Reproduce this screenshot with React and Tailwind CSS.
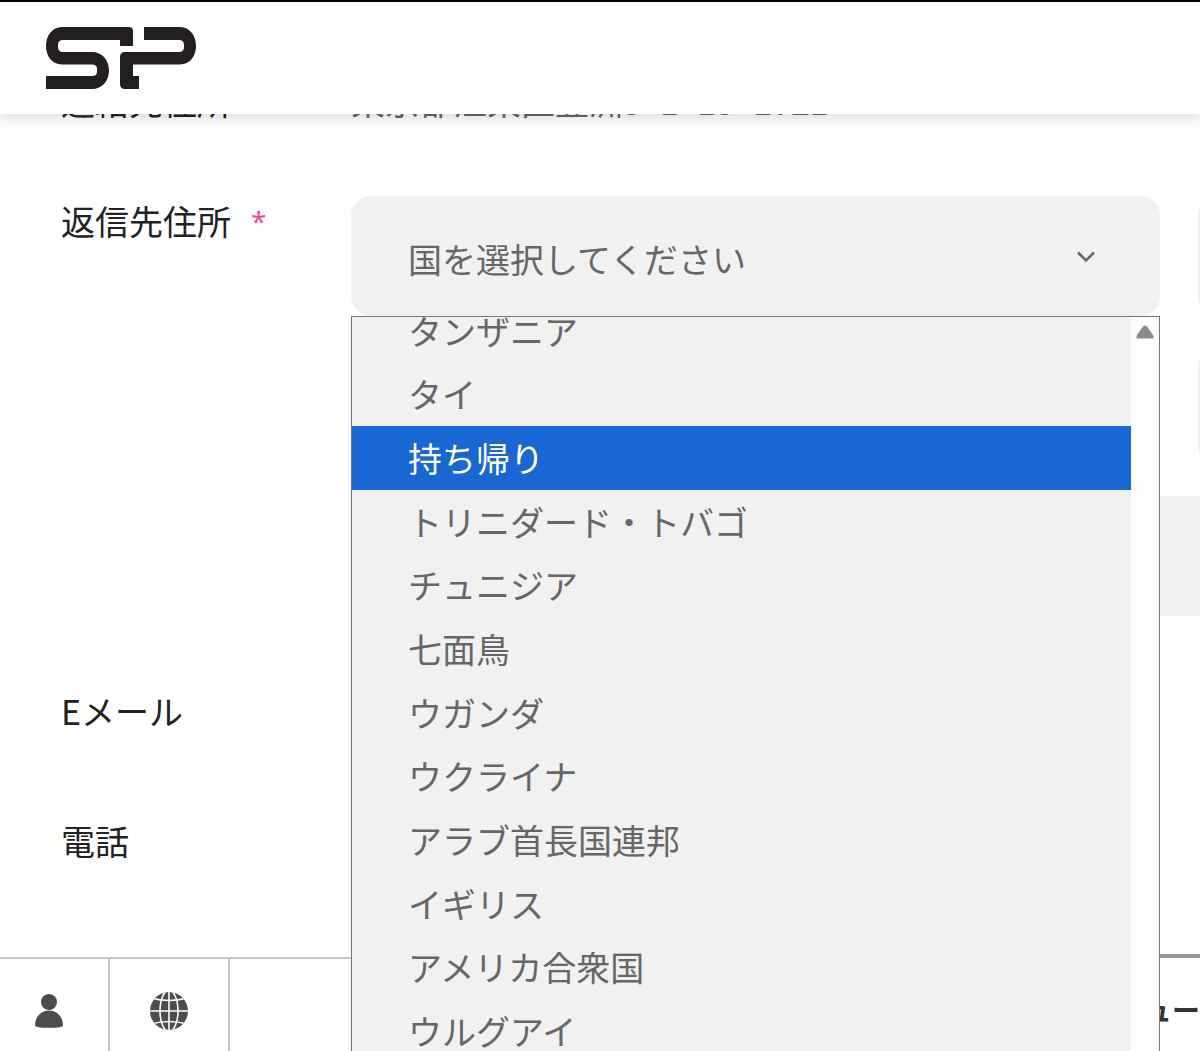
const countries = [
  'タンザニア',
  'タイ',
  '持ち帰り',
  'トリニダード・トバゴ',
  'チュニジア',
  '七面鳥',
  'ウガンダ',
  'ウクライナ',
  'アラブ首長国連邦',
  'イギリス',
  'アメリカ合衆国',
  'ウルグアイ',
];

function Logo() {
  return (
    <svg viewBox="0 0 150 62" className="h-[62px] w-[150px] fill-[#231f20]" aria-hidden="true">
      <path d="M16 0H83Q87 0 87 4V19H74V13H17Q12 13 12 18V20Q12 25 17 25H46C56 25 63 33 63 43.5S56 62 46 62H0V49H46Q51 49 51 44.5V42Q51 37.5 46 37.5H16C6 37.5 0 29 0 19S6 0 16 0Z" />
      <path d="M98 0H134C144 0 150 9 150 19S144 37.5 134 37.5H87V49H93V62H79Q74 62 74 57V30Q74 25 79 25H133Q138 25 138 20V18Q138 13 133 13H98Z" />
    </svg>
  );
}

function UserIcon() {
  return (
    <svg viewBox="0 0 30 36" className="h-9 w-[30px] fill-[#4d4d4d]" aria-hidden="true">
      <circle cx="15" cy="9" r="8" />
      <path d="M15 17.5C23 17.5 29 24 29 32.5Q29 34.8 15 34.8T1 32.5C1 24 7 17.5 15 17.5Z" />
    </svg>
  );
}

function GlobeIcon() {
  return (
    <svg viewBox="0 0 38 38" className="h-[38px] w-[38px]" aria-hidden="true">
      <defs>
        <clipPath id="globe">
          <circle cx="19" cy="19" r="19" />
        </clipPath>
      </defs>
      <circle cx="19" cy="19" r="19" fill="#4d4d4d" />
      <g clipPath="url(#globe)" fill="none" stroke="#fff" strokeWidth="1.6">
        <path d="M19 0V38M0 19H38" />
        <ellipse cx="19" cy="19" rx="9" ry="20.5" />
        <path d="M1 6Q19 11 37 6M1 32Q19 27 37 32" />
      </g>
    </svg>
  );
}

function CountryField() {
  return (
    <div className="relative">
      <select
        id="country"
        defaultValue=""
        className="h-[120px] w-full appearance-none rounded-[20px] bg-[#f1f1f1] pt-1 pr-24 pb-0 pl-[57px] text-[34px] text-[#666] outline-none"
      >
        <option value="">国を選択してください</option>
        {countries.map((name) => (
          <option key={name}>{name}</option>
        ))}
      </select>
      <svg
        viewBox="0 0 20 12"
        className="pointer-events-none absolute top-[55px] right-16 h-3 w-5 fill-none stroke-[#666]"
        strokeWidth="2.6"
        aria-hidden="true"
      >
        <path d="M2 1.5L10 9.5L18 1.5" />
      </svg>
      <div className="absolute top-full right-0 left-0 z-20 flex overflow-hidden border border-[#767676] bg-[#f1f1f1]">
        <ul role="listbox" aria-label="国" className="-mt-[18px] grid h-[764px] flex-1 auto-rows-fr">
          {countries.map((name) => (
            <li
              key={name}
              role="option"
              aria-selected={name === '持ち帰り'}
              className="flex items-center pl-14 text-[34px] leading-[48px] text-[#666] aria-selected:bg-[#1967d2] aria-selected:text-white"
            >
              {name}
            </li>
          ))}
        </ul>
        <div className="flex w-7 justify-center bg-[#fcfcfc] pt-2">
          <svg viewBox="0 0 18 14" className="h-3.5 w-[18px] fill-[#8b8b8b]" aria-hidden="true">
            <path d="M7 1.5Q9 -0.5 11 1.5L17 10Q18.5 13.5 16 13.5H2Q-0.5 13.5 1 10Z" />
          </svg>
        </div>
      </div>
    </div>
  );
}

const box = 'h-[120px] w-full rounded-[20px] bg-[#f1f1f1] px-14 text-[34px] text-[#666] outline-none';
const label = 'w-[290px] shrink-0 text-[34px] leading-[50px]';

export default function App() {
  return (
    <div className="relative flex h-screen flex-col overflow-hidden bg-white font-['Noto_Sans_CJK_JP',sans-serif] text-[#222]">
      <header className="relative z-30 flex h-[114px] shrink-0 items-center border-t-2 border-black bg-white pl-[46px] shadow-[0_0_16px_2px_rgba(0,0,0,0.18)]">
        <a href="#home" aria-label="SP">
          <Logo />
        </a>
      </header>

      <main className="-mt-[38px] min-h-0 flex-1 pl-[61px]">
        <div className="flex">
          <div className={label}>連絡先住所</div>
          <div className="text-[34px] leading-[50px] whitespace-nowrap text-[#666]">東京都江東区豊洲5–1–15–1721</div>
        </div>
        <div className="mt-[70px] flex">
          <label htmlFor="country" className={`${label} flex gap-5`}>
            返信先住所
            <span className="font-['Noto_Sans',sans-serif] text-[28px] leading-[50px] text-[#ef4e97]">*</span>
          </label>
          <div className="min-w-0 flex-1">
            <div className="grid w-[195%] grid-cols-2 gap-x-[38px] gap-y-[30px]">
              <CountryField />
              <input aria-label="都道府県" className={box} />
              <input aria-label="市区町村" className={box} />
              <input aria-label="郵便番号" className={box} />
              <input aria-label="住所" className={`${box} col-span-2`} />
            </div>
          </div>
        </div>
        <div className="mt-[70px] flex">
          <div className={label}>Eメール</div>
        </div>
        <div className="mt-20 flex">
          <div className={label}>電話</div>
        </div>
      </main>

      <footer className="relative z-10 flex h-[94px] shrink-0 bg-white">
        <button aria-label="アカウント" className="flex w-[110px] items-center justify-center border-t-2 border-r-2 border-[#c4c4c4] pt-3 pr-2.5">
          <UserIcon />
        </button>
        <button aria-label="言語" className="flex w-[120px] items-center justify-center border-t-2 border-r-2 border-[#c4c4c4] pt-3">
          <GlobeIcon />
        </button>
        <div className="flex-1 border-t-2 border-[#c4c4c4]" />
        <button className="-mt-[3px] w-[200px] border-t-4 border-[#999] pt-2 text-right text-[28px] font-bold text-[#333]">
          メニュー
        </button>
      </footer>
    </div>
  );
}
